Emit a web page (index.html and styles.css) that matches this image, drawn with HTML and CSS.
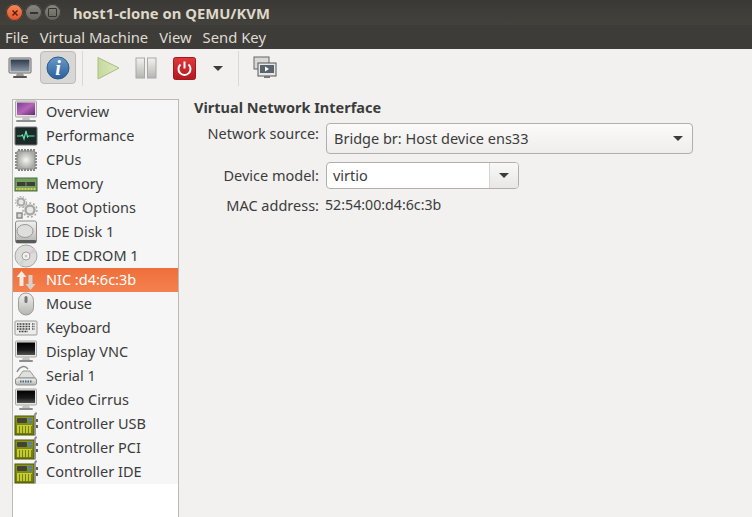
FILE: index.html
```html
<!DOCTYPE html>
<html>
  <head>
    <title>host1-clone on QEMU/KVM</title>
    <link rel="stylesheet" href="styles.css">
  </head>
  <body>
    <!-- Shared gradients and icons -->
    <svg class="sprites" xmlns="http://www.w3.org/2000/svg">
      <defs>
        <linearGradient id="g-purple" x1="0" y1="0" x2="1" y2="1"><stop offset="0" stop-color="#7a3f8f"/><stop offset=".5" stop-color="#b765b8"/><stop offset="1" stop-color="#5d2c70"/></linearGradient>
        <linearGradient id="g-dark" x1="0" y1="0" x2="0" y2="1"><stop offset="0" stop-color="#000"/><stop offset=".6" stop-color="#1a1a1a"/><stop offset="1" stop-color="#555"/></linearGradient>
        <linearGradient id="g-silver" x1="0" y1="0" x2="0" y2="1"><stop offset="0" stop-color="#f2f2f0"/><stop offset="1" stop-color="#b4b4b0"/></linearGradient>
        <linearGradient id="g-blue" x1="0" y1="0" x2="0" y2="1"><stop offset="0" stop-color="#6b9ac8"/><stop offset="1" stop-color="#2a5f9c"/></linearGradient>
        <linearGradient id="g-red" x1="0" y1="0" x2="0" y2="1"><stop offset="0" stop-color="#e0383c"/><stop offset="1" stop-color="#b01a20"/></linearGradient>
        <linearGradient id="g-play" x1="0" y1="0" x2="1" y2="0"><stop offset="0" stop-color="#c4d99a"/><stop offset="1" stop-color="#dfe9c4"/></linearGradient>
        <linearGradient id="g-screen" x1="0" y1="0" x2="0" y2="1"><stop offset="0" stop-color="#2b3a4d"/><stop offset="1" stop-color="#8b98a6"/></linearGradient>
        <linearGradient id="g-card" x1="0" y1="0" x2="0" y2="1"><stop offset="0" stop-color="#8d9618"/><stop offset="1" stop-color="#6e7a0c"/></linearGradient>
        <radialGradient id="g-chip"><stop offset="0" stop-color="#f6f6f4"/><stop offset="1" stop-color="#a8a8a4"/></radialGradient>
        <symbol id="i-monitor" viewBox="0 0 24 24">
          <rect x="1.5" y="1" width="21" height="16" rx="1" fill="#e4e4e2" stroke="#a8a8a6"/>
          <rect x="3" y="2.5" width="18" height="12.5" fill="url(#g-dark)"/>
          <path d="M9 17h6l1 3H8z" fill="#c4c4c2"/>
          <rect x="5" y="20" width="14" height="2" rx="1" fill="#8e8e8c"/>
        </symbol>
        <symbol id="i-card" viewBox="0 0 24 24">
          <rect x="1" y="4" width="19" height="19" fill="url(#g-card)" stroke="#4d5408"/>
          <rect x="3" y="6" width="10" height="5" rx="1" fill="#3f433c"/>
          <rect x="14" y="6" width="4" height="2" fill="#4f7fb5"/>
          <rect x="14" y="9" width="4" height="2" fill="#4f7fb5"/>
          <path d="M3 13.5h15" stroke="#c6ce30" stroke-width="1"/>
          <path d="M4 14v7M7 14v7M10 14v7M13 14v7M16 14v7" stroke="#d6de3c" stroke-width="1.6"/>
          <path d="M21 1.5h2M21 1.5v22" stroke="#8c8f8c" stroke-width="1.8" fill="none"/>
          <rect x="22" y="7" width="2" height="3" fill="#5c5f5c"/>
          <rect x="22" y="13" width="2" height="3" fill="#5c5f5c"/>
        </symbol>
      </defs>
    </svg>

    <header class="titlebar">
      <div class="win-buttons">
        <span class="win-btn win-close">
          <svg viewBox="0 0 10 10"><path d="M2.5 2.5l5 5M7.5 2.5l-5 5" stroke="#5a1a08" stroke-width="1.4"/></svg>
        </span>
        <span class="win-btn"><span class="win-min"></span></span>
        <span class="win-btn"><span class="win-max"></span></span>
      </div>
      <span class="win-title">host1-clone on QEMU/KVM</span>
    </header>

    <nav class="menubar">
      <span>File</span>
      <span>Virtual Machine</span>
      <span>View</span>
      <span>Send Key</span>
    </nav>

    <div class="toolbar">
      <button class="tool">
        <svg width="26" height="24" viewBox="0 0 26 24">
          <rect x="2" y="2" width="22" height="15" rx="1" fill="#dcdcda" stroke="#6a6a68"/>
          <rect x="3.5" y="3.5" width="19" height="12" fill="url(#g-screen)"/>
          <path d="M10 17h6l1 3H9z" fill="#9a9a98"/>
          <rect x="6" y="20" width="14" height="2" rx="1" fill="#555"/>
        </svg>
      </button>
      <button class="tool tool-active">
        <svg width="24" height="24" viewBox="0 0 24 24">
          <circle cx="12" cy="12" r="11" fill="url(#g-blue)" stroke="#2a5a90"/>
          <text x="12" y="19" class="info-i">i</text>
        </svg>
      </button>
      <span class="tool-sep"></span>
      <button class="tool">
        <svg width="24" height="24" viewBox="0 0 24 24"><path d="M2 1.500L23 12 2 23z" fill="url(#g-play)" stroke="#a9bf7e"/></svg>
      </button>
      <button class="tool">
        <svg width="22" height="22" viewBox="0 0 22 22">
          <rect x="1" y="1" width="8.5" height="20" fill="url(#g-silver)" stroke="#a8a8a4"/>
          <rect x="12.5" y="1" width="8.5" height="20" fill="url(#g-silver)" stroke="#a8a8a4"/>
        </svg>
      </button>
      <button class="tool">
        <svg width="23" height="23" viewBox="0 0 23 23">
          <rect x=".5" y=".5" width="22" height="22" rx="2" fill="url(#g-red)" stroke="#a01a1e"/>
          <path d="M7.5 7.5a6 6 0 1 0 8 0" fill="none" stroke="#fff" stroke-width="2"/>
          <path d="M11.5 4.5v7" stroke="#fff" stroke-width="2"/>
        </svg>
      </button>
      <button class="tool tool-arrow"><span class="caret"></span></button>
      <span class="tool-sep tool-sep-b"></span>
      <button class="tool">
        <svg width="24" height="24" viewBox="0 0 24 24">
          <rect x="1" y="1" width="15" height="12" fill="#d8d8d6" stroke="#666"/>
          <rect x="5" y="7" width="18" height="13" fill="#e6e6e4" stroke="#555"/>
          <rect x="7" y="9" width="14" height="8" fill="#59636e"/>
          <path d="M12 10.5l4 2.5-4 2.5z" fill="#fff"/>
          <path d="M11 20h6v2h-6z" fill="#777"/>
        </svg>
      </button>
    </div>

    <main class="content">
      <aside class="hw-panel">
        <ul class="hw-list">
          <li class="hw-row">
            <svg class="hw-icon" viewBox="0 0 24 24">
              <rect x="1.5" y="1" width="21" height="16" rx="1" fill="#e4e4e2" stroke="#a8a8a6"/>
              <rect x="3" y="2.5" width="18" height="12.5" fill="url(#g-purple)"/>
              <path d="M9 17h6l1 3H8z" fill="#c4c4c2"/>
              <rect x="2" y="20" width="20" height="2" rx="1" fill="#8e8e8c"/>
            </svg>
            <span class="hw-label">Overview</span>
          </li>
          <li class="hw-row">
            <svg class="hw-icon" viewBox="0 0 24 24">
              <rect x="1" y="3" width="22" height="18" rx="1" fill="#1c2a28" stroke="#777"/>
              <path d="M3 12h4l1.500-1 1.500 4 2-8 1.500 6 1-1h6" fill="none" stroke="#5fe0b0" stroke-width="1.2"/>
            </svg>
            <span class="hw-label">Performance</span>
          </li>
          <li class="hw-row">
            <svg class="hw-icon" viewBox="0 0 24 24">
              <path d="M5 1v22M8 1v22M11 1v22M14 1v22M17 1v22M20 1v22M1 5h22M1 8h22M1 11h22M1 14h22M1 17h22M1 20h22" stroke="#6a6a68" stroke-width="1.6"/>
              <rect x="3" y="3" width="18" height="18" rx="1" fill="url(#g-chip)" stroke="#8a8a88"/>
            </svg>
            <span class="hw-label">CPUs</span>
          </li>
          <li class="hw-row">
            <svg class="hw-icon" viewBox="0 0 24 24">
              <rect x="1" y="6" width="22" height="13" fill="#75a060" stroke="#4a6a40"/>
              <rect x="3" y="10" width="8.5" height="4" fill="#3c3f38"/>
              <rect x="12.5" y="10" width="8.5" height="4" fill="#3c3f38"/>
              <path d="M2 17h20" stroke="#d8d050" stroke-width="2" stroke-dasharray="1 .5"/>
            </svg>
            <span class="hw-label">Memory</span>
          </li>
          <li class="hw-row">
            <svg class="hw-icon" viewBox="0 0 24 24">
              <circle cx="7" cy="6" r="3.5" fill="#e8e8e6" stroke="#a8a8a6" stroke-width="2"/>
              <circle cx="16" cy="14" r="4.5" fill="#e8e8e6" stroke="#a8a8a6" stroke-width="2.5"/>
              <circle cx="16" cy="14" r="7" fill="none" stroke="#a8a8a6" stroke-width="1.5" stroke-dasharray="2 2"/>
              <circle cx="7" cy="6" r="5.5" fill="none" stroke="#b4b4b2" stroke-width="1.2" stroke-dasharray="1.5 1.5"/>
              <rect x="3" y="17" width="5" height="5" fill="#d8d8d6" stroke="#8a8a88" stroke-width="1.5"/>
            </svg>
            <span class="hw-label">Boot Options</span>
          </li>
          <li class="hw-row">
            <svg class="hw-icon" viewBox="0 0 24 24">
              <rect x="1.5" y="1" width="21" height="22" rx="2" fill="url(#g-silver)" stroke="#8e8e8c"/>
              <ellipse cx="11" cy="11" rx="8" ry="6.5" fill="#dededc" stroke="#9a9a98"/>
              <rect x="2" y="20" width="20" height="3" rx="1" fill="#5a5a58"/>
            </svg>
            <span class="hw-label">IDE Disk 1</span>
          </li>
          <li class="hw-row">
            <svg class="hw-icon" viewBox="0 0 24 24">
              <circle cx="12" cy="12" r="11" fill="#dcdcda" stroke="#a8a8a6"/>
              <path d="M12 12L20 4a11 11 0 0 1 2 4z" fill="#d8c8d8"/>
              <path d="M12 12L4 20a11 11 0 0 0 4 2z" fill="#c8d8d0"/>
              <circle cx="12" cy="12" r="4" fill="#f4f4f2" stroke="#a0a09e"/>
              <circle cx="12" cy="12" r="1.5" fill="#c8c8c6"/>
            </svg>
            <span class="hw-label">IDE CDROM 1</span>
          </li>
          <li class="hw-row hw-row-active">
            <svg class="hw-icon" viewBox="0 0 24 24">
              <path d="M7.5 3l5 6h-3v9h-4V9h-3z" fill="#f4ece6"/>
              <path d="M16.5 22l5-6h-3V7h-4v9h-3z" fill="#d8d0ca"/>
            </svg>
            <span class="hw-label">NIC :d4:6c:3b</span>
          </li>
          <li class="hw-row">
            <svg class="hw-icon" viewBox="0 0 24 24">
              <rect x="4.5" y="1" width="15" height="22" rx="7.5" fill="url(#g-silver)" stroke="#9a9a98"/>
              <rect x="10.5" y="4" width="3" height="7" rx="1.5" fill="#777"/>
            </svg>
            <span class="hw-label">Mouse</span>
          </li>
          <li class="hw-row">
            <svg class="hw-icon" viewBox="0 0 24 24">
              <rect x="1" y="5" width="22" height="14" rx="1" fill="#ececea" stroke="#9a9a98"/>
              <path d="M3 8h13M3 10.500h13M3 13h13M5 15.500h9" stroke="#3e3e3c" stroke-width="1.6" stroke-dasharray="1 .5"/>
              <path d="M18 8h3M18 10.500h3M18 13h3" stroke="#555" stroke-width="1.5" stroke-dasharray="1 .5"/>
            </svg>
            <span class="hw-label">Keyboard</span>
          </li>
          <li class="hw-row"><svg class="hw-icon"><use href="#i-monitor"/></svg><span class="hw-label">Display VNC</span></li>
          <li class="hw-row">
            <svg class="hw-icon" viewBox="0 0 24 24">
              <path d="M3 8C6 2 11 1 14 5" fill="none" stroke="#8e8e8c" stroke-width="1.5"/>
              <path d="M4 14l5-7h7l5 7z" fill="#e0e0de" stroke="#9a9a98"/>
              <rect x="1.5" y="14" width="21" height="7" rx="2" fill="url(#g-silver)" stroke="#8e8e8c"/>
              <path d="M6 17.500h12" stroke="#4a6a90" stroke-width="2" stroke-dasharray="1.5 1"/>
            </svg>
            <span class="hw-label">Serial 1</span>
          </li>
          <li class="hw-row"><svg class="hw-icon"><use href="#i-monitor"/></svg><span class="hw-label">Video Cirrus</span></li>
          <li class="hw-row"><svg class="hw-icon"><use href="#i-card"/></svg><span class="hw-label">Controller USB</span></li>
          <li class="hw-row"><svg class="hw-icon"><use href="#i-card"/></svg><span class="hw-label">Controller PCI</span></li>
          <li class="hw-row"><svg class="hw-icon"><use href="#i-card"/></svg><span class="hw-label">Controller IDE</span></li>
        </ul>
      </aside>

      <section class="details">
        <h2 class="details-title">Virtual Network Interface</h2>
        <div class="form-grid">
          <label class="form-label form-label-top">Network source:</label>
          <div class="combo">
            <span class="combo-text">Bridge br: Host device ens33</span>
            <span class="caret"></span>
          </div>
          <label class="form-label form-label-up">Device model:</label>
          <div class="combo-entry">
            <span class="entry-text">virtio</span>
            <span class="entry-btn"><span class="caret"></span></span>
          </div>
          <label class="form-label">MAC address:</label>
          <span class="mac">52:54:00:d4:6c:3b</span>
        </div>
      </section>
    </main>
  </body>
</html>
```

FILE: styles.css
```css
html,
body {
  height: 100%;
}

body {
  margin: 0;
  height: 517px;
  overflow: hidden;
  display: flex;
  flex-direction: column;
  background-color: #f2f1f0;
  color: #3c3c3c;
  font-family: "Noto Sans", "Open Sans", sans-serif;
  font-size: 14.5px;
}

.sprites {
  display: block;
  width: 0;
  height: 0;
}

/* Window title */
.titlebar {
  height: 25px;
  display: flex;
  align-items: center;
  background: linear-gradient(#3a3935, #43413c);
}

.win-buttons {
  display: flex;
  gap: 2px;
  margin-left: 6px;
}

.win-btn {
  width: 17px;
  height: 17px;
  border-radius: 50%;
  display: flex;
  align-items: center;
  justify-content: center;
  background: linear-gradient(#8a8880, #63615b);
  box-shadow: inset 0 0 0 1px #3a3934;
}

.win-close {
  background: linear-gradient(#f58a5c, #e2512a);
}

.win-close svg {
  width: 10px;
  height: 10px;
}

.win-min {
  width: 8px;
  height: 2px;
  background: #35342f;
}

.win-max {
  width: 7px;
  height: 7px;
  border: 1px solid #35342f;
  border-radius: 1px;
}

.win-title {
  margin-left: 12px;
  color: #dfd8c8;
  font-size: 14.8px;
  font-weight: 700;
}

/* Menu */
.menubar {
  height: 24px;
  display: flex;
  align-items: center;
  gap: 11px;
  padding-left: 5px;
  background: #3e3c38;
  color: #dfdbd2;
  font-size: 14.8px;
}

/* Toolbar */
.toolbar {
  height: 43px;
  display: flex;
  align-items: flex-start;
  padding: 2px 0 0 2px;
  box-sizing: border-box;
  background: #f2f1f0;
}

.tool {
  width: 36px;
  height: 33px;
  margin: 0;
  padding: 1px 0 0;
  display: flex;
  align-items: center;
  justify-content: center;
  background: none;
  border: 1px solid transparent;
  border-radius: 4px;
}

.tool + .tool {
  margin-left: 2px;
}

.tool-active {
  background: #d8d7d4;
  border-color: #bdbcb8;
}

.tool + .tool-arrow {
  width: 32px;
  margin-left: 0;
}

.tool-sep {
  width: 1px;
  height: 35px;
  margin: 0 7px 0 6px;
  background: #d9d8d5;
}

.tool-sep-b {
  margin: 0 8px 0 4px;
}

.caret {
  width: 0;
  height: 0;
  border-left: 5px solid transparent;
  border-right: 5px solid transparent;
  border-top: 5px solid #3c3c3c;
}

.info-i {
  fill: #fff;
  font-family: "Liberation Serif", serif;
  font-size: 20px;
  font-weight: 700;
  font-style: italic;
  text-anchor: middle;
}

/* Main area */
.content {
  flex: 1;
  display: flex;
  padding: 7px 0 0 12px;
  min-height: 0;
}

.hw-panel {
  width: 167px;
  flex-shrink: 0;
  box-sizing: border-box;
  background: #fff;
  border: 1px solid #bcbab5;
  border-bottom: none;
}

.hw-list {
  margin: 0;
  padding: 0;
  list-style: none;
  background: #f6f6f6;
}

.hw-row {
  height: 24px;
  display: flex;
  align-items: center;
  padding-left: 1px;
  color: #3c3c3c;
}

.hw-row-active {
  background: linear-gradient(#ee6f3b, #f4814f);
  color: #fff;
}

.hw-icon {
  width: 24px;
  height: 24px;
  margin-right: 8px;
  flex-shrink: 0;
}

.hw-label {
  margin-bottom: 2px;
  white-space: nowrap;
}

/* Details */
.details {
  flex: 1;
  padding: 0 0 0 15px;
}

.details-title {
  margin: 0;
  padding-bottom: 2px;
  font-size: 14.5px;
  line-height: 16px;
  font-weight: 700;
  color: #3c3c3c;
}

.form-grid {
  display: grid;
  grid-template-columns: 125px auto;
  column-gap: 7px;
  row-gap: 7px;
  justify-content: start;
  align-items: center;
  margin-top: 6px;
}

.form-label {
  text-align: right;
  line-height: 18px;
}

.form-label-top {
  align-self: start;
  padding-top: 1px;
}

.form-label-up {
  padding-bottom: 2px;
}

.combo {
  width: 367px;
  height: 31px;
  margin-bottom: 1px;
  box-sizing: border-box;
  padding: 0 9px 0 7px;
  display: flex;
  align-items: center;
  justify-content: space-between;
  border: 1px solid #b1afaa;
  border-radius: 4px;
  background: linear-gradient(#fbfbfa, #eeedeb);
}

.combo-text {
  margin-bottom: 2px;
}

.combo-entry {
  width: 193px;
  height: 27px;
  box-sizing: border-box;
  display: flex;
  border: 1px solid #b1afaa;
  border-radius: 4px;
  overflow: hidden;
  background: #fff;
}

.entry-text {
  flex: 1;
  padding-left: 6px;
  line-height: 25px;
}

.entry-btn {
  width: 28px;
  display: flex;
  align-items: center;
  justify-content: center;
  border-left: 1px solid #d5d3cf;
  background: linear-gradient(#f8f8f7, #e8e7e5);
}

.mac {
  margin-left: -1px;
  font-size: 14.2px;
  line-height: 18px;
}
```
